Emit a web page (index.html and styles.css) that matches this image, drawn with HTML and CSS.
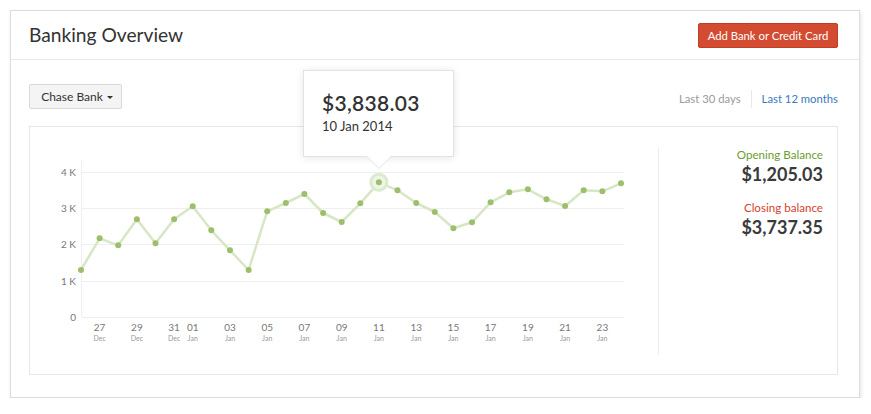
FILE: index.html
```html
<!DOCTYPE html>
<html>
<head>
<meta charset="utf-8">
<link rel="stylesheet" href="styles.css">
</head>
<body>
<div class="card">
  <div class="card-header">
    <h1 class="title">Banking Overview</h1>
    <button class="btn-add">Add Bank or Credit Card</button>
  </div>
  <div class="card-body">
    <div class="toolbar">
      <button class="dropdown">Chase Bank <span class="caret"></span></button>
      <div class="ranges">
        <span class="range">Last 30 days</span>
        <span class="sep"></span>
        <span class="range active">Last 12 months</span>
      </div>
    </div>
    <div class="chart-box">
      <div class="chart">
        <svg width="628" height="247" viewBox="0 0 628 247">
          <g transform="translate(-30,-127)">
            <line class="axis" x1="81.5" y1="160" x2="81.5" y2="317"/>
            <line class="grid" x1="82" y1="172.5" x2="624" y2="172.5"/>
            <line class="grid" x1="82" y1="208.5" x2="624" y2="208.5"/>
            <line class="grid" x1="82" y1="244.5" x2="624" y2="244.5"/>
            <line class="grid" x1="82" y1="281.5" x2="624" y2="281.5"/>
            <line class="grid" x1="82" y1="317.5" x2="624" y2="317.5"/>
            <text class="ylab" x="76" y="176">4 K</text>
            <text class="ylab" x="76" y="212">3 K</text>
            <text class="ylab" x="76" y="248">2 K</text>
            <text class="ylab" x="76" y="285">1 K</text>
            <text class="ylab" x="76" y="321">0</text>

            <g class="xlabels">
              <text x="99.6" y="331">27</text><text class="mon" x="99.6" y="340.5">Dec</text>
              <text x="136.9" y="331">29</text><text class="mon" x="136.9" y="340.5">Dec</text>
              <text x="174.1" y="331">31</text><text class="mon" x="174.1" y="340.5">Dec</text>
              <text x="192.7" y="331">01</text><text class="mon" x="192.7" y="340.5">Jan</text>
              <text x="230" y="331">03</text><text class="mon" x="230" y="340.5">Jan</text>
              <text x="267.2" y="331">05</text><text class="mon" x="267.2" y="340.5">Jan</text>
              <text x="304.4" y="331">07</text><text class="mon" x="304.4" y="340.5">Jan</text>
              <text x="341.7" y="331">09</text><text class="mon" x="341.7" y="340.5">Jan</text>
              <text x="378.9" y="331">11</text><text class="mon" x="378.9" y="340.5">Jan</text>
              <text x="416.2" y="331">13</text><text class="mon" x="416.2" y="340.5">Jan</text>
              <text x="453.4" y="331">15</text><text class="mon" x="453.4" y="340.5">Jan</text>
              <text x="490.6" y="331">17</text><text class="mon" x="490.6" y="340.5">Jan</text>
              <text x="527.9" y="331">19</text><text class="mon" x="527.9" y="340.5">Jan</text>
              <text x="565.1" y="331">21</text><text class="mon" x="565.1" y="340.5">Jan</text>
              <text x="602.4" y="331">23</text><text class="mon" x="602.4" y="340.5">Jan</text>
            </g>

            <polyline class="series" points="81,270 99.6,238.3 118.2,245.3 136.9,219.3 155.5,243.3 174.1,219.3 192.7,206.3 211.3,230.3 230,250.3 248.6,270 267.2,211.3 285.8,203 304.4,194 323.1,213 341.7,222 360.3,203.3 378.9,182.3 397.5,190.3 416.2,203 434.8,212 453.4,228.3 472,222.3 490.6,202.3 509.3,192.3 527.9,189.3 546.5,199.3 565.1,206 583.7,190.3 602.4,191.3 621,183.3"/>
            <circle class="halo" cx="378.9" cy="182.3" r="8"/>
            <g class="dots">
              <circle cx="81" cy="270" r="3"/><circle cx="99.6" cy="238.3" r="3"/><circle cx="118.2" cy="245.3" r="3"/>
              <circle cx="136.9" cy="219.3" r="3"/><circle cx="155.5" cy="243.3" r="3"/><circle cx="174.1" cy="219.3" r="3"/>
              <circle cx="192.7" cy="206.3" r="3"/><circle cx="211.3" cy="230.3" r="3"/><circle cx="230" cy="250.3" r="3"/>
              <circle cx="248.6" cy="270" r="3"/><circle cx="267.2" cy="211.3" r="3"/><circle cx="285.8" cy="203" r="3"/>
              <circle cx="304.4" cy="194" r="3"/><circle cx="323.1" cy="213" r="3"/><circle cx="341.7" cy="222" r="3"/>
              <circle cx="360.3" cy="203.3" r="3"/><circle cx="378.9" cy="182.3" r="3"/><circle cx="397.5" cy="190.3" r="3"/>
              <circle cx="416.2" cy="203" r="3"/><circle cx="434.8" cy="212" r="3"/><circle cx="453.4" cy="228.3" r="3"/>
              <circle cx="472" cy="222.3" r="3"/><circle cx="490.6" cy="202.3" r="3"/><circle cx="509.3" cy="192.3" r="3"/>
              <circle cx="527.9" cy="189.3" r="3"/><circle cx="546.5" cy="199.3" r="3"/><circle cx="565.1" cy="206" r="3"/>
              <circle cx="583.7" cy="190.3" r="3"/><circle cx="602.4" cy="191.3" r="3"/><circle cx="621" cy="183.3" r="3"/>
            </g>
          </g>
        </svg>
      </div>
      <div class="summary">
        <div class="stat">
          <div class="stat-label opening">Opening Balance</div>
          <div class="stat-value">$1,205.03</div>
        </div>
        <div class="stat">
          <div class="stat-label closing">Closing balance</div>
          <div class="stat-value">$3,737.35</div>
        </div>
      </div>
    </div>
  </div>
  <div class="tooltip">
    <div class="tt-amount">$3,838.03</div>
    <div class="tt-date">10 Jan 2014</div>
  </div>
</div>
</body>
</html>
```
FILE: styles.css
```css
* { box-sizing: border-box; }
body {
  margin: 0;
  background: #fff;
  font-family: Lato, "Open Sans", "Liberation Sans", sans-serif;
  color: #333;
}
.card {
  position: relative;
  margin: 10px 0 0 10px;
  width: 850px;
  height: 388px;
  border: 1px solid #dcdcdc;
  background: #fff;
  box-shadow: 1px 2px 4px rgba(0,0,0,0.11);
}
.card-header {
  height: 49px;
  border-bottom: 1px solid #e8e8e8;
  display: flex;
  align-items: center;
  justify-content: space-between;
  padding: 0 21px 0 18px;
}
.title {
  margin: 0;
  font-size: 19.2px;
  font-weight: 400;
  color: #333;
  padding-bottom: 2px;
}
.btn-add {
  height: 25px;
  width: 140px;
  padding: 0;
  border: 1px solid #c13e24;
  border-radius: 2px;
  background: #d34b30;
  color: #fff;
  font-family: inherit;
  font-size: 11.3px;
  margin-top: 1px;
}
.card-body {
  padding: 24px 21px 0 18px;
}
.toolbar {
  display: flex;
  align-items: center;
  justify-content: space-between;
  height: 25px;
}
.dropdown {
  height: 25px;
  width: 93px;
  padding: 0 0 0 3px;
  border: 1px solid #d9d9d9;
  border-radius: 2px;
  background: #f4f4f4;
  color: #333;
  font-family: inherit;
  font-size: 12px;
  display: flex;
  align-items: center;
  justify-content: center;
  gap: 4px;
}
.caret {
  width: 0;
  height: 0;
  border-left: 3px solid transparent;
  border-right: 3px solid transparent;
  border-top: 3px solid #333;
  margin-top: 1px;
}
.ranges {
  display: flex;
  align-items: center;
  font-size: 11.3px;
  margin-top: 4px;
}
.range { color: #9a9a9a; }
.range.active { color: #3a7ac0; }
.sep {
  width: 1px;
  height: 18px;
  background: #e8e8e8;
  margin: 0 10px;
}
.chart-box {
  margin-top: 17px;
  height: 249px;
  border: 1px solid #e6e6e6;
  display: flex;
}
.chart {
  width: 628px;
  flex: none;
}
.chart svg { display: block; }
.axis, .grid { stroke: #efefef; stroke-width: 1; }
.ylab {
  font-family: Lato, "Open Sans", sans-serif;
  font-size: 10px;
  fill: #777;
  text-anchor: end;
}
.xlabels text {
  font-family: Lato, "Open Sans", sans-serif;
  font-size: 10px;
  fill: #777;
  text-anchor: middle;
}
.xlabels text.mon {
  font-size: 7px;
  fill: #999;
}
.series {
  fill: none;
  stroke: #d7e7c5;
  stroke-width: 2.5;
  stroke-linejoin: round;
}
.halo {
  fill: #eef5e7;
  stroke: #dcead0;
  stroke-width: 3;
}
.dots circle { fill: #9dbf6c; }
.summary {
  flex: 1;
  margin: 20px 0 19px;
  border-left: 1px solid #ededed;
  padding: 1px 14px 0 0;
  text-align: right;
}
.stat + .stat { margin-top: 17px; }
.stat-label {
  font-size: 11.6px;
  line-height: 14px;
}
.opening { color: #6b9d2c; }
.closing { color: #d5432e; }
.stat-value {
  font-size: 18px;
  line-height: 20px;
  font-weight: 700;
  color: #3a3a3a;
  margin-top: 2px;
}
.tooltip {
  position: absolute;
  left: 292px;
  top: 59px;
  width: 151px;
  height: 87px;
  background: #fff;
  border: 1px solid #e3e3e3;
  box-shadow: 0 1px 8px rgba(0,0,0,0.10);
  padding: 19px 0 0 18px;
}
.tooltip::before,
.tooltip::after {
  content: "";
  position: absolute;
  left: 63px;
  width: 0;
  height: 0;
  border-left: 12px solid transparent;
  border-right: 12px solid transparent;
}
.tooltip::before {
  top: 86px;
  border-top: 12px solid #e3e3e3;
}
.tooltip::after {
  top: 85px;
  border-top: 12px solid #fff;
}
.tt-amount {
  font-size: 21px;
  line-height: 26px;
  font-weight: 600;
  color: #333;
  letter-spacing: 0.3px;
}
.tt-date {
  font-size: 13px;
  line-height: 16px;
  margin-top: 2px;
  color: #333;
}
```
